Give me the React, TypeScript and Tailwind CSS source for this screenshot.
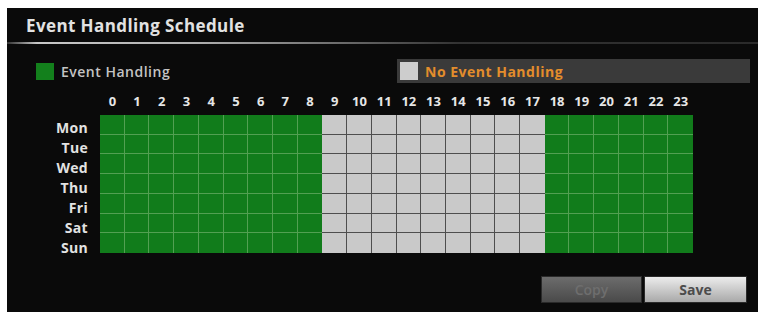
import React from "react";

const hours = Array.from({ length: 24 }, (_, i) => i);
const days = ["Mon", "Tue", "Wed", "Thu", "Fri", "Sat", "Sun"];
const isOn = (h: number) => h < 9 || h >= 18;

export default function App() {
  return (
    <div
      className="w-[762px] h-[312px] bg-white pl-[7px] pt-[8px] overflow-hidden"
      style={{ fontFamily: '"Open Sans", "DejaVu Sans", sans-serif' }}
    >
      <div className="w-[751px] h-[304px] bg-[#0a0a0a] flex flex-col">
        {/* Title */}
        <div className="h-[34px] flex items-center pl-[19px] pt-[1px]">
          <span className="text-[17px] font-bold text-[#e2e2e2] tracking-[0.4px]">
            Event Handling Schedule
          </span>
        </div>
        <div className="h-[2px] bg-[linear-gradient(to_right,#333_0%,#c8c8c8_4%,#b0b0b0_25%,#6a6a6a_45%,#333_60%,#2a2a2a_100%)]" />

        {/* Legend */}
        <div className="mt-[15px] h-[24px] flex items-center">
          <div className="flex-1 flex items-center pl-[29px]">
            <div className="w-[18px] h-[17px] bg-[#13801c]" />
            <span className="ml-[7px] text-[14px] font-semibold text-[#c4c4c4] tracking-[0.5px]">
              Event Handling
            </span>
          </div>
          <div className="w-[353px] h-[24px] mr-[8px] bg-[#3a3a3a] flex items-center pl-[3px]">
            <div className="w-[18px] h-[18px] bg-[#cdcdcd]" />
            <span className="ml-[7px] text-[14px] font-bold text-[#e38d2c] tracking-[0.5px]">
              No Event Handling
            </span>
          </div>
        </div>

        {/* Hours */}
        <div className="mt-[10px] h-[16px] flex">
          <div className="w-[93px]" />
          <div className="w-[593px] grid grid-cols-[repeat(24,minmax(0,1fr))]">
            {hours.map((h) => (
              <div
                key={h}
                className="text-center text-[13px] font-bold leading-[16px] text-[#e6e6e6]"
              >
                {h}
              </div>
            ))}
          </div>
        </div>

        {/* Grid */}
        <div className="mt-[6px] h-[138px] flex items-start">
          <div className="w-[93px] h-[138px] pr-[12px] pt-[3px] flex flex-col items-end">
            {days.map((d) => (
              <div
                key={d}
                className="h-[20px] shrink-0 leading-[20px] text-[14px] font-bold text-[#e2e2e2] tracking-[0.3px]"
              >
                {d}
              </div>
            ))}
          </div>
          <div className="w-[593px] h-[138px] grid grid-cols-[repeat(24,minmax(0,1fr))] grid-rows-7">
            {days.map((d, r) =>
              hours.map((h) => {
                const on = isOn(h);
                const lastCol = h === 23 || h === 8 || h === 17;
                const lastRow = r === 6;
                return (
                  <div
                    key={d + h}
                    className={
                      (on
                        ? "bg-[#117c1b] border-[#52a052] "
                        : "bg-[#c9c9c9] border-[#4e4e4e] ") +
                      (lastCol ? "" : "border-r ") +
                      (lastRow ? "" : "border-b")
                    }
                  />
                );
              })
            )}
          </div>
        </div>

        {/* Buttons */}
        <div className="mt-[23px] flex justify-end pr-[11px] gap-[2px]">
          <button className="w-[101px] h-[27px] bg-[linear-gradient(to_bottom,#6c6c6c,#4a4a4a)] border border-[#2a2a2a] text-[14px] font-semibold text-[#6e6e6e]">
            Copy
          </button>
          <button className="w-[103px] h-[27px] bg-[linear-gradient(to_bottom,#ececec,#a9a9a9)] border border-[#2a2a2a] text-[14px] font-bold text-[#4c4c4c]">
            Save
          </button>
        </div>
      </div>
    </div>
  );
}
